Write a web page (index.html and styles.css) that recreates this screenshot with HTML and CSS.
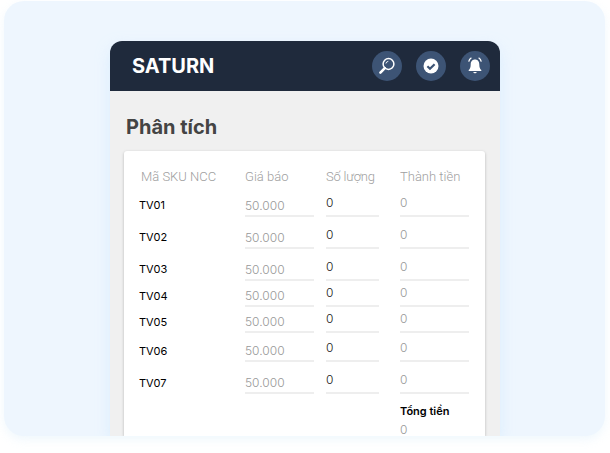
FILE: index.html
```html
<!DOCTYPE html>
<html lang="en">
<head>
    <meta charset="UTF-8">
    <meta name="viewport" content="width=device-width, initial-scale=1.0">
    <title>Saturn</title>
    <link rel="stylesheet" href="styles.css">
</head>
<body>
    <div class="backdrop">
        <div class="app">
            <header class="topbar">
                <span class="brand">SATURN</span>
                <div class="actions">
                    <span class="action">
                        <svg viewBox="0 0 20 20" width="20" height="20"><circle cx="11.500" cy="8" r="5.400" fill="none" stroke="#fff" stroke-width="1.500"/><path d="M7.800 12.200 3.400 16.600" stroke="#fff" stroke-width="2.600" stroke-linecap="round"/><path d="M8.900 7.500a2.800 2.800 0 0 1 2.400-2.200" fill="none" stroke="#fff" stroke-width="0.900"/></svg>
                    </span>
                    <span class="action">
                        <svg viewBox="0 0 20 20" width="20" height="20"><circle cx="10" cy="10" r="7.500" fill="#fff"/><path d="M6.400 10.200 9 12.700 13.600 8.200" fill="none" stroke="#3d5475" stroke-width="2.200"/></svg>
                    </span>
                    <span class="action">
                        <svg viewBox="0 0 20 20" width="20" height="20"><path d="M10 3.400c-2.900 0-4.300 2.300-4.300 5 0 3-.8 4.500-2 5.500v1h12.600v-1c-1.200-1-2-2.500-2-5.500 0-2.700-1.400-5-4.300-5z" fill="#fff"/><path d="M7.800 16h4.400L10 17.600z" fill="#fff"/><path d="M6.400 1.800C5 2.700 4.100 3.900 3.700 5.600M13.600 1.800C15 2.700 15.900 3.900 16.300 5.600" fill="none" stroke="#fff" stroke-width="1.300"/></svg>
                    </span>
                </div>
            </header>
            <main class="content">
                <h1 class="title">Phân tích</h1>
                <section class="card">
                    <div class="row head">
                        <span class="sku">Mã SKU NCC</span>
                        <span class="price">Giá báo</span>
                        <span class="qty">Số lượng</span>
                        <span class="amount">Thành tiền</span>
                    </div>
                    <div class="row r31"><span class="sku">TV01</span><span class="price">50.000</span><span class="qty">0</span><span class="amount">0</span></div>
                    <div class="row r32"><span class="sku">TV02</span><span class="price">50.000</span><span class="qty">0</span><span class="amount">0</span></div>
                    <div class="row r32"><span class="sku">TV03</span><span class="price">50.000</span><span class="qty">0</span><span class="amount">0</span></div>
                    <div class="row r26 tight"><span class="sku">TV04</span><span class="price">50.000</span><span class="qty">0</span><span class="amount">0</span></div>
                    <div class="row r26 tight"><span class="sku">TV05</span><span class="price">50.000</span><span class="qty">0</span><span class="amount">0</span></div>
                    <div class="row r29 tight"><span class="sku">TV06</span><span class="price">50.000</span><span class="qty">0</span><span class="amount">0</span></div>
                    <div class="row r32 tight"><span class="sku">TV07</span><span class="price">50.000</span><span class="qty">0</span><span class="amount">0</span></div>
                    <div class="total">
                        <strong>Tổng tiền</strong>
                        <span>0</span>
                    </div>
                </section>
            </main>
        </div>
    </div>
</body>
</html>
```

FILE: styles.css
```css
html, body {
    margin: 0;
    height: 453px;
    overflow: hidden;
    background: #fff;
}
body {
    font-family: Inter, "Liberation Sans", sans-serif;
    padding: 1px 5px 0 4px;
    box-sizing: border-box;
}
.backdrop {
    height: 435px;
    padding: 40px 105px 0 106px;
    box-sizing: border-box;
    background: #eef6fe;
    border-radius: 20px;
    box-shadow: 0 4px 10px rgba(205, 232, 250, 0.3);
    overflow: hidden;
}
.app {
    height: 395px;
    display: flex;
    flex-direction: column;
    border-radius: 12px 12px 0 0;
    box-shadow: 0 6px 14px rgba(205, 232, 255, 0.6);
}
.topbar {
    height: 50px;
    flex: none;
    display: flex;
    align-items: center;
    justify-content: space-between;
    padding: 0 10px 0 22px;
    background: #1f2a3c;
    border-radius: 12px 12px 0 0;
}
.brand {
    color: #fff;
    font-size: 20px;
    font-weight: 700;
}
.actions {
    display: flex;
    gap: 14px;
}
.action {
    width: 30px;
    height: 30px;
    display: flex;
    align-items: center;
    justify-content: center;
    border-radius: 50%;
    background: #3d5475;
}
.content {
    flex: 1;
    min-height: 0;
    padding: 0 15px 0 14px;
    background: #f0f0f0;
}
.title {
    margin: 0;
    padding: 22px 0 0 2px;
    height: 60px;
    box-sizing: border-box;
    color: #444;
    font-size: 20px;
    font-weight: 700;
    line-height: 28px;
}
.card {
    height: 285px;
    padding-top: 17px;
    box-sizing: border-box;
    background: #fff;
    border-radius: 3px 3px 0 0;
    box-shadow: 0 1px 3px rgba(0, 0, 0, 0.25);
}
.row {
    display: flex;
    align-items: flex-end;
    font-family: Inter, sans-serif;
    font-weight: 300;
    font-size: 12px;
    line-height: 16px;
}
.row span {
    display: block;
    box-sizing: border-box;
}
.sku {
    width: 106px;
    margin-left: 15px;
    padding-bottom: 4px;
    color: #000;
    font-weight: 400;
    font-size: 11px;
}
.tight .sku {
    padding-bottom: 3px;
}
.price, .amount {
    color: #999;
}
.price {
    width: 69px;
    margin-right: 12px;
    padding-bottom: 1px;
    border-bottom: 2px solid #eee;
}
.qty {
    width: 53px;
    margin-right: 21px;
    padding-bottom: 4px;
    color: #222;
    border-bottom: 2px solid #eee;
}
.amount {
    width: 69px;
    padding-bottom: 4px;
    border-bottom: 2px solid #eee;
}
.r32 { height: 32px; }
.r31 { height: 31px; }
.r29 { height: 29px; }
.r26 { height: 26px; }
.head {
    height: 18px;
    color: #a0a0a0;
}
.head span, .head .sku {
    padding-bottom: 1px;
    border: 0;
    color: #a0a0a0;
    font-family: Roboto, sans-serif;
    font-weight: 300;
    font-size: 13px;
}
.head .sku {
    padding-left: 2px;
}
.head .qty {
    letter-spacing: -0.2px;
}
.total {
    margin: 10px 0 0 276px;
    font-size: 11px;
    line-height: 14px;
    color: #000;
}
.total strong {
    display: block;
    font-weight: 600;
}
.total span {
    display: block;
    margin-top: 4px;
    font-weight: 300;
    font-size: 12px;
    line-height: 16px;
    color: #999;
}
```
